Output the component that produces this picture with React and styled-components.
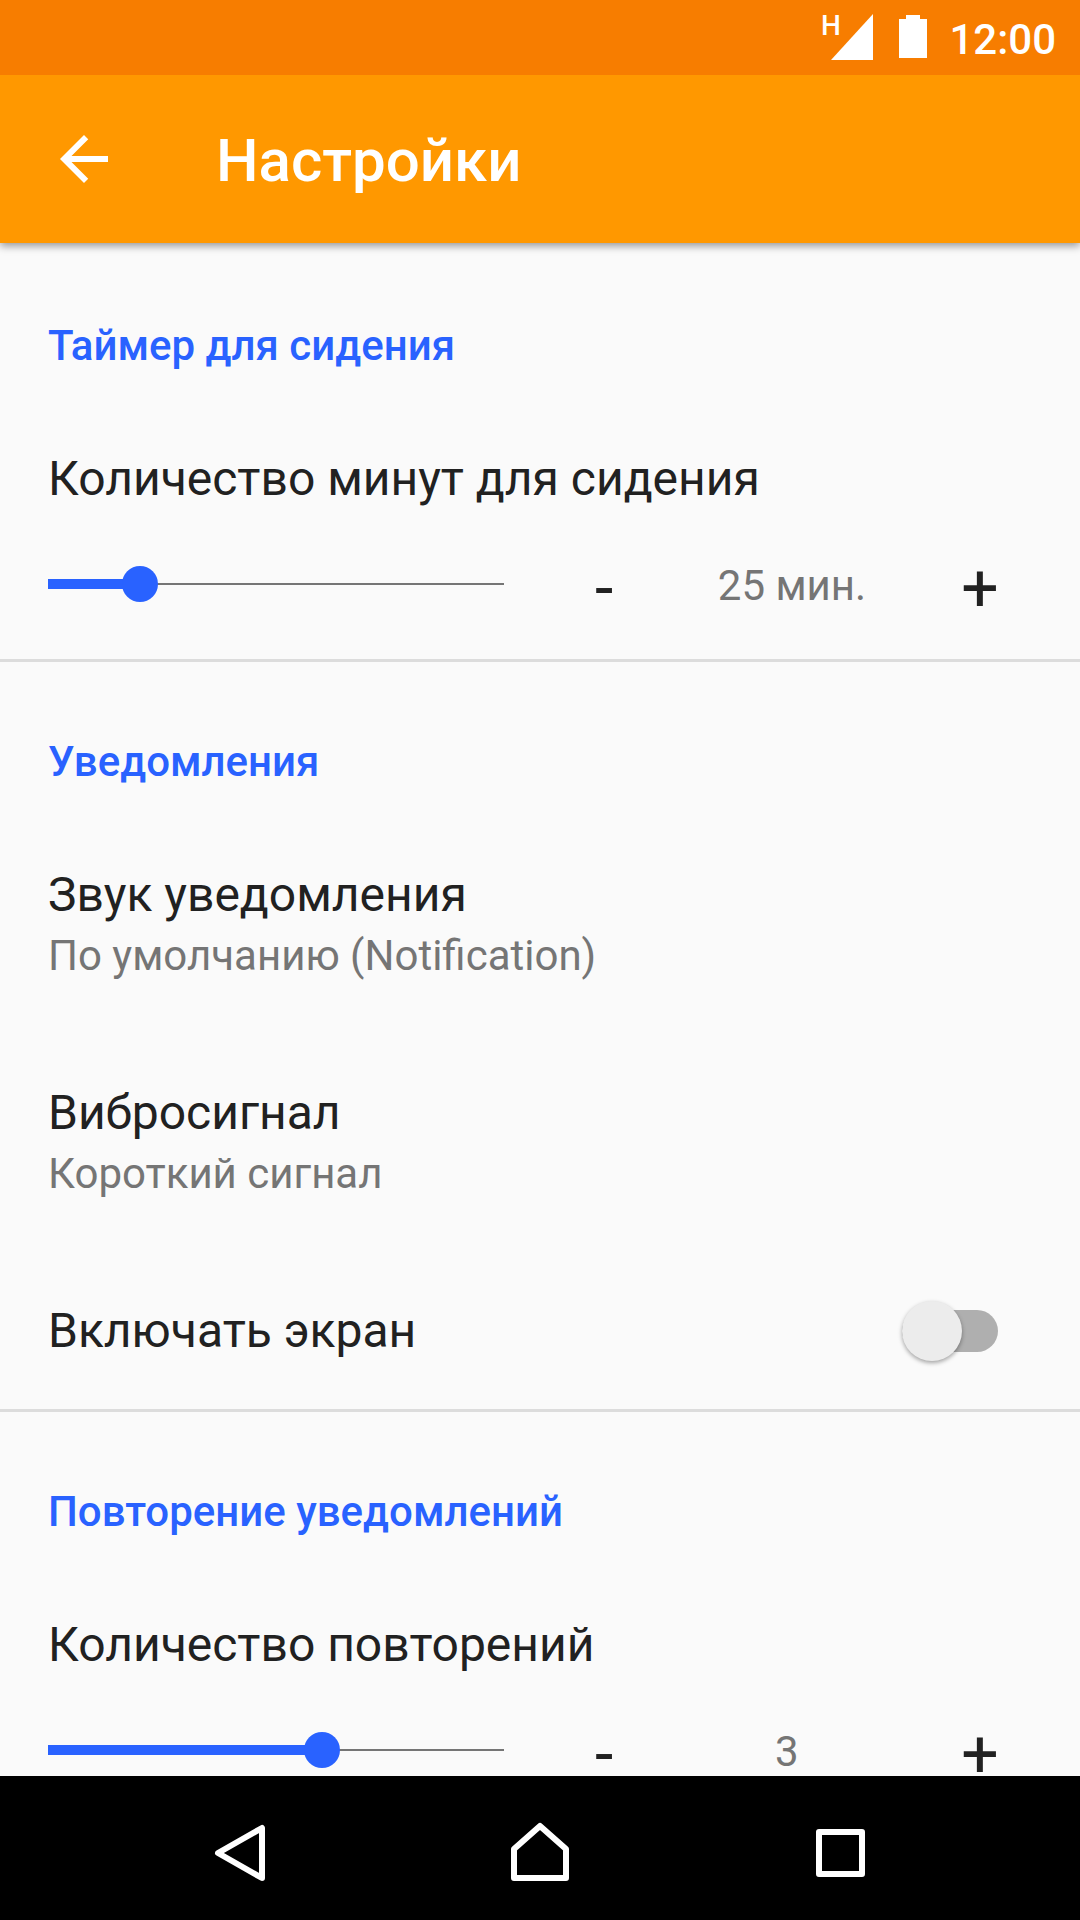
import React, { useState } from "react"
import styled, { createGlobalStyle } from "styled-components"

const GlobalStyle = createGlobalStyle`
  * {
    box-sizing: border-box;
  }
  body {
    margin: 0;
    background: #fafafa;
    color: #212121;
    font-family: Roboto, "Noto Sans", sans-serif;
  }
  button,
  input {
    margin: 0;
    padding: 0;
    border: none;
    outline: 0;
    background: transparent;
    color: inherit;
    font-family: inherit;
    cursor: pointer;
  }
  svg {
    display: block;
    overflow: visible;
  }
`

const Screen = styled.div`
  display: flex;
  flex-direction: column;
  height: 100vh;
`

const StatusBar = styled.div`
  display: flex;
  flex-shrink: 0;
  justify-content: flex-end;
  align-items: flex-start;
  gap: 22px;
  height: 75px;
  padding: 14px 24px 0;
  background: #f77d00;
  color: white;
  z-index: 2;
`

const NetworkType = styled.text`
  font-family: Roboto, sans-serif;
  font-size: 28px;
  font-weight: 500;
`

const Clock = styled.span`
  font-size: 42px;
  font-weight: 500;
  line-height: 52px;
`

const AppBar = styled.header`
  display: flex;
  flex-shrink: 0;
  align-items: flex-start;
  gap: 96px;
  padding: 48px;
  height: 168px;
  background: #ff9800;
  color: white;
  box-shadow: 0 3px 8px rgba(0, 0, 0, 0.4);
  z-index: 1;

  h1 {
    margin: 0;
    font-size: 60px;
    font-weight: 500;
    line-height: 76px;
  }
`

const Content = styled.main`
  flex: 1;
  min-height: 0;
  overflow-y: auto;
  scrollbar-width: none;
`

const Section = styled.section`
  border-top: 3px solid #dcdcdc;

  &:first-child {
    border-color: transparent;
  }
`

const SectionTitle = styled.h2`
  margin: 0;
  padding: 76px 48px 27px;
  color: #2962ff;
  font-size: 42px;
  font-weight: 500;
  line-height: 48px;
`

const Item = styled.div`
  padding: 54px 48px 51px;
`

const LinkItem = styled.button`
  display: block;
  width: 100%;
  padding: 54px 48px 51px;
  text-align: left;
`

const SwitchItem = styled.label`
  display: flex;
  justify-content: space-between;
  align-items: center;
  padding: 54px 82px 50px 48px;
  cursor: pointer;
`

const ItemTitle = styled.span`
  display: block;
  font-size: 48px;
  line-height: 56px;
`

const Summary = styled.span`
  display: block;
  margin-top: 9px;
  color: #757575;
  font-size: 42px;
  line-height: 48px;
`

const SliderRow = styled.div`
  display: flex;
  align-items: center;
  gap: 30px;
  margin: 53px 0 0 -18px;
  height: 48px;
`

/* the thumb radius hangs over both ends of the track */
const Slider = styled.input`
  appearance: none;
  flex: 1;
  min-width: 0;
  height: 36px;

  &::-webkit-slider-runnable-track {
    height: 36px;
    background:
      linear-gradient(#2962ff, #2962ff) 18px center /
        calc((100% - 36px) * var(--filled)) 10px no-repeat,
      linear-gradient(#757575, #757575) 18px center / calc(100% - 36px) 2px
        no-repeat;
  }

  &::-webkit-slider-thumb {
    appearance: none;
    width: 36px;
    height: 36px;
    border-radius: 50%;
    background: #2962ff;
  }
`

const Stepper = styled.div`
  display: grid;
  grid-template-columns: 104px 272px 104px;
  align-items: start;
  padding-top: 10px;
`

const StepButton = styled.button`
  font-size: 66px;
  line-height: 54px;
`

const Value = styled.output`
  color: #757575;
  font-size: 42px;
  line-height: 48px;
  text-align: center;
  white-space: pre;
`

const Switch = styled.input`
  appearance: none;
  position: relative;
  width: 96px;
  height: 42px;
  border-radius: 21px;
  background: #afafaf;

  &::before {
    content: "";
    position: absolute;
    top: -9px;
    left: 0;
    width: 60px;
    height: 60px;
    border-radius: 50%;
    background: #ececec;
    box-shadow: 0 2px 4px rgba(0, 0, 0, 0.35);
    transition: left 200ms;
  }
  &:checked {
    background: #94b0ff;
  }
  &:checked::before {
    left: 36px;
    background: #2962ff;
  }
`

const NavBar = styled.nav`
  display: grid;
  flex-shrink: 0;
  grid-template-columns: repeat(3, 1fr);
  padding: 0 90px;
  height: 144px;
  background: black;
`

const NavButton = styled.button`
  display: flex;
  justify-content: center;
  padding-top: 36px;

  svg {
    fill: none;
    stroke: white;
    stroke-width: 6;
  }
`

const SliderSetting = ({ id, title, min, max, initial, unit = "" }) => {
  const [value, setValue] = useState(initial)
  const change = next => setValue(Math.min(max, Math.max(min, next)))
  return (
    <Item>
      <ItemTitle as="label" htmlFor={id}>
        {title}
      </ItemTitle>
      <SliderRow>
        <Slider
          id={id}
          type="range"
          min={min}
          max={max}
          value={value}
          style={{ "--filled": (value - min) / (max - min) }}
          onChange={e => change(Number(e.target.value))}
        />
        <Stepper>
          <StepButton onClick={() => change(value - 1)}>-</StepButton>
          <Value htmlFor={id}>{`${value} ${unit}`}</Value>
          <StepButton onClick={() => change(value + 1)}>+</StepButton>
        </Stepper>
      </SliderRow>
    </Item>
  )
}

const App = () => {
  const [wakeScreen, setWakeScreen] = useState(false)
  return (
    <Screen>
      <GlobalStyle />
      <StatusBar>
        <svg width="56" height="46" fill="white">
          <NetworkType x="0" y="21">
            H
          </NetworkType>
          <path d="M10 46L52 0V46z" />
        </svg>
        <svg width="28" height="44" fill="white">
          <path d="M7 1h14v4h7v39H0V5h7z" />
        </svg>
        <Clock>12:00</Clock>
      </StatusBar>
      <AppBar>
        <button aria-label="Назад">
          <svg width="72" height="72" viewBox="0 0 24 24" fill="white">
            <path d="M20 11H7.83l5.59-5.59L12 4l-8 8 8 8 1.41-1.41L7.83 13H20v-2z" />
          </svg>
        </button>
        <h1>Настройки</h1>
      </AppBar>
      <Content>
        <Section>
          <SectionTitle>Таймер для сидения</SectionTitle>
          <SliderSetting
            id="minutes"
            title="Количество минут для сидения"
            min={1}
            max={120}
            initial={25}
            unit="мин."
          />
        </Section>
        <Section>
          <SectionTitle>Уведомления</SectionTitle>
          <LinkItem>
            <ItemTitle>Звук уведомления</ItemTitle>
            <Summary>По умолчанию (Notification)</Summary>
          </LinkItem>
          <LinkItem>
            <ItemTitle>Вибросигнал</ItemTitle>
            <Summary>Короткий сигнал</Summary>
          </LinkItem>
          <SwitchItem>
            <ItemTitle>Включать экран</ItemTitle>
            <Switch
              type="checkbox"
              role="switch"
              checked={wakeScreen}
              onChange={() => setWakeScreen(!wakeScreen)}
            />
          </SwitchItem>
        </Section>
        <Section>
          <SectionTitle>Повторение уведомлений</SectionTitle>
          <SliderSetting
            id="repeats"
            title="Количество повторений"
            min={0}
            max={5}
            initial={3}
          />
        </Section>
      </Content>
      <NavBar>
        <NavButton aria-label="Назад">
          <svg width="72" height="72" strokeLinejoin="round">
            <path d="M14 41L58 16V66z" />
          </svg>
        </NavButton>
        <NavButton aria-label="Домой">
          <svg width="72" height="72" strokeLinejoin="round">
            <path d="M36 14L62 37V66H10V37z" />
          </svg>
        </NavButton>
        <NavButton aria-label="Недавние">
          <svg width="72" height="72" strokeLinejoin="round">
            <path d="M15 20H58V62H15z" />
          </svg>
        </NavButton>
      </NavBar>
    </Screen>
  )
}

export default App
